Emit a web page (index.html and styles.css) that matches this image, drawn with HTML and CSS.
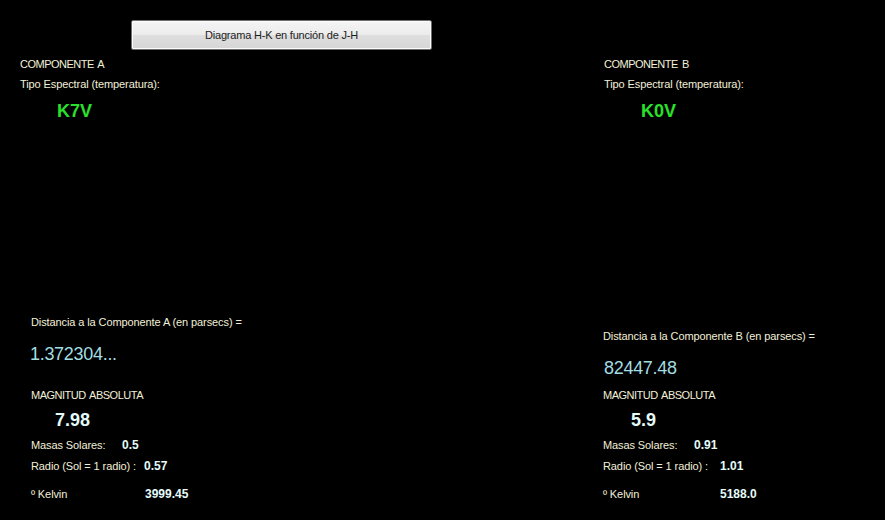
FILE: index.html
```html
<!DOCTYPE html>
<html lang="es">
<head>
<meta charset="utf-8">
<title>Componentes</title>
<link rel="stylesheet" href="styles.css">
</head>
<body>
<header class="toolbar">
  <button class="btn" type="button">Diagrama H-K en función de J-H</button>
</header>
<main class="panels">
  <section class="panel panel-a">
    <div class="label caps title">COMPONENTE A</div>
    <div class="label tipo">Tipo Espectral (temperatura):</div>
    <div class="spectral">K7V</div>
    <div class="label dist-label">Distancia a la Componente A (en parsecs) =</div>
    <div class="dist-value">1.372304...</div>
    <div class="label caps mag-label">MAGNITUD ABSOLUTA</div>
    <div class="mag-value">7.98</div>
    <div class="row masas"><span class="label key">Masas Solares:</span><span class="val">0.5</span></div>
    <div class="row radio"><span class="label key">Radio (Sol = 1 radio) :</span><span class="val">0.57</span></div>
    <div class="row kelvin"><span class="label key">º Kelvin</span><span class="val">3999.45</span></div>
  </section>
  <section class="panel panel-b">
    <div class="label caps title">COMPONENTE B</div>
    <div class="label tipo">Tipo Espectral (temperatura):</div>
    <div class="spectral">K0V</div>
    <div class="label dist-label">Distancia a la Componente B (en parsecs) =</div>
    <div class="dist-value">82447.48</div>
    <div class="label caps mag-label">MAGNITUD ABSOLUTA</div>
    <div class="mag-value">5.9</div>
    <div class="row masas"><span class="label key">Masas Solares:</span><span class="val">0.91</span></div>
    <div class="row radio"><span class="label key">Radio (Sol = 1 radio) :</span><span class="val">1.01</span></div>
    <div class="row kelvin"><span class="label key">º Kelvin</span><span class="val">5188.0</span></div>
  </section>
</main>
</body>
</html>
```

FILE: styles.css
```css
html, body {
  margin: 0;
  padding: 0;
  background: #000;
}
body {
  width: 885px;
  height: 520px;
  overflow: hidden;
  font-family: "Liberation Sans", Arial, sans-serif;
  font-size: 11px;
  color: #f3f0d8;
}
.toolbar {
  padding: 20px 0 0 131px;
  height: 30px;
}
.btn {
  display: block;
  box-sizing: border-box;
  width: 301px;
  height: 30px;
  margin: 0;
  padding: 0;
  border: 1px solid #6e6e6e;
  border-radius: 2px;
  box-shadow: inset 0 0 0 1px #fbfbfb;
  background: linear-gradient(#f4f4f4 0%, #ececec 48%, #dedede 52%, #d6d6d6 100%);
  font-family: "Liberation Sans", Arial, sans-serif;
  font-size: 11px;
  letter-spacing: -0.2px;
  color: #1c1c1c;
  text-align: center;
}
.panels {
  display: grid;
  grid-template-columns: 583px 1fr;
  padding-top: 8px;
}
.panel {
  display: flex;
  flex-direction: column;
}
.label {
  line-height: 13px;
  white-space: nowrap;
  letter-spacing: -0.1px;
}
.label.caps {
  letter-spacing: -0.5px;
  word-spacing: 1.5px;
}
.title { padding-left: 20px; }
.tipo { padding-left: 20px; margin-top: 7px; }
.spectral {
  margin-top: 10px;
  padding-left: 57px;
  font-size: 18px;
  font-weight: bold;
  line-height: 20px;
  color: #2ae02a;
}
.dist-label { padding-left: 31px; margin-top: 195px; }
.dist-value {
  margin-top: 15px;
  padding-left: 30px;
  font-size: 18px;
  line-height: 20px;
  letter-spacing: -0.3px;
  color: #a2dde2;
}
.mag-label { padding-left: 31px; margin-top: 25px; }
.mag-value {
  margin-top: 8px;
  padding-left: 55px;
  font-size: 18px;
  font-weight: bold;
  line-height: 20px;
  color: #e4fbfb;
}
.row {
  display: flex;
  align-items: baseline;
  padding-left: 31px;
  line-height: 13px;
}
.row .val {
  font-size: 12px;
  font-weight: bold;
  color: #e4fbfb;
}
.masas { margin-top: 9px; }
.radio { margin-top: 8px; }
.kelvin { margin-top: 15px; }
.panel-a .masas .key { width: 91px; }
.panel-a .radio .key { width: 113px; }
.panel-a .kelvin .key { width: 114px; }

.panel-b .title,
.panel-b .tipo { padding-left: 21px; }
.panel-b .spectral { padding-left: 58px; }
.panel-b .dist-label { padding-left: 20px; margin-top: 209px; }
.panel-b .dist-value { padding-left: 21px; }
.panel-b .mag-label { padding-left: 20px; margin-top: 11px; }
.panel-b .mag-value { padding-left: 48px; }
.panel-b .row { padding-left: 20px; }
.panel-b .masas .key { width: 91px; }
.panel-b .radio .key { width: 117px; }
.panel-b .kelvin .key { width: 117px; }
```
